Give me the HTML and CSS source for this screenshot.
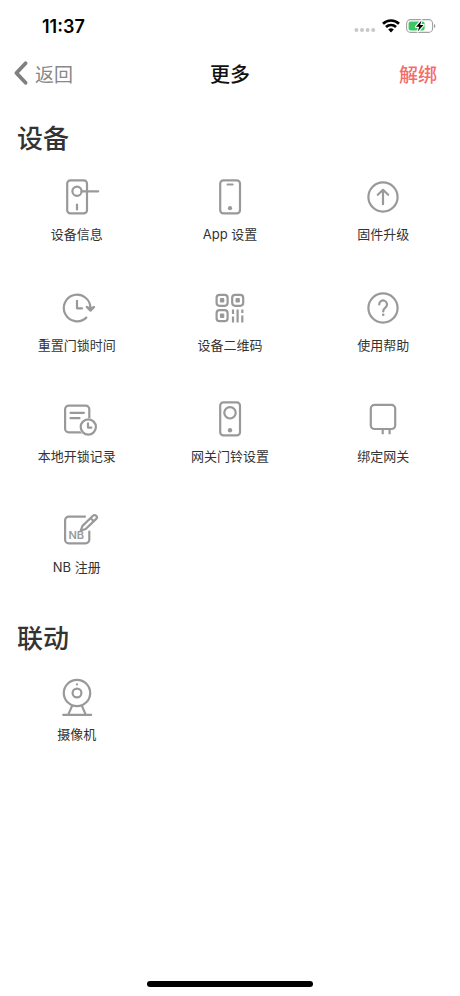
FILE: index.html
```html
<!DOCTYPE html>
<html lang="zh-CN">
<head>
<meta charset="utf-8">
<meta name="viewport" content="width=device-width, initial-scale=1">
<title>更多</title>
<link rel="stylesheet" href="styles.css">
</head>
<body>
<div class="status">
  <span class="time">11:37</span>
  <div class="signals">
    <svg width="22" height="16" viewBox="0 0 22 16" fill="#c8c8c8" aria-hidden="true"><circle cx="2.4" cy="12" r="2"/><circle cx="8" cy="12" r="2"/><circle cx="13.6" cy="12" r="2"/><circle cx="19.2" cy="12" r="2"/></svg>
    <svg width="18" height="16" viewBox="0 0 18 16" aria-hidden="true"><g fill="none" stroke="#000" stroke-width="2.6"><path d="M1 5.8a11.4 11.4 0 0 1 16 0"/><path d="M4 9a7.1 7.1 0 0 1 10 0"/></g><path d="M9 14.4 6.2 11.6a4 4 0 0 1 5.6 0z"/></svg>
    <svg width="30" height="16" viewBox="0 0 30 16" aria-hidden="true"><rect x=".6" y="1.6" width="26" height="12.8" rx="4" fill="none" stroke="#a0a0a0" stroke-width="1.1"/><path d="M28 6v4q1.4-.6 1.4-2T28 6z" fill="#999"/><rect x="2.6" y="3.4" width="16" height="9.2" rx="2" fill="#3bc763"/><path d="M15.5 2.4 10 8.8h3.2L11.7 13.6l5.8-6.5h-3.4z" fill="#000" stroke="#fff" stroke-width="2.2" stroke-linejoin="round" paint-order="stroke"/></svg>
  </div>
</div>
<header class="nav">
  <button class="back" type="button"><svg width="16" height="26" viewBox="0 0 16 26" aria-hidden="true"><path d="M12.6 3.2 3.4 13l9.2 9.8" fill="none" stroke="#808080" stroke-width="3.8" stroke-linecap="round" stroke-linejoin="round"/></svg>返回</button>
  <h1>更多</h1>
  <button class="unbind" type="button">解绑</button>
</header>
<main>
  <section>
    <h2>设备</h2>
    <div class="grid">
      <button class="item" type="button"><svg class="icon" viewBox="0 0 48 40"><rect x="14.2" y="3.4" width="19.8" height="33" rx="3.2"/><circle cx="24" cy="14.3" r="4.6"/><path d="M28.6 14.3H45.2M24 27.5v5"/></svg>设备信息</button>
      <button class="item" type="button"><svg class="icon" viewBox="0 0 48 40"><rect x="14.2" y="3.4" width="19.8" height="33" rx="3.2"/><path d="M21.6 7.5h5"/><circle class="solid" cx="24" cy="31.2" r="2.1"/></svg>App 设置</button>
      <button class="item" type="button"><svg class="icon" viewBox="0 0 48 40"><circle cx="24" cy="20" r="14.6"/><path d="M24 27.2V13M18.8 17.8l5.2-5 5.2 5"/></svg>固件升级</button>
      <button class="item" type="button"><svg class="icon" viewBox="0 0 48 40"><path d="M33.3 29.6A13.3 13.3 0 1 1 37.4 20.5M24 12.8V20.3h5"/><path class="head" d="M33.8 19l3.7 3.6 3.6-3.6-3.6 1.6z"/></svg>重置门锁时间</button>
      <button class="item" type="button"><svg class="icon" viewBox="0 0 48 40"><rect x="10.6" y="6.8" width="11" height="11" rx="3"/><rect x="26.2" y="6.8" width="11" height="11" rx="3"/><rect x="10.6" y="22.2" width="11" height="11" rx="3"/><g class="solid"><rect x="13.9" y="10.1" width="4.4" height="4.4" rx="1"/><rect x="29.5" y="10.1" width="4.4" height="4.4" rx="1"/><rect x="13.9" y="25.5" width="4.4" height="4.4" rx="1"/></g><path stroke-linecap="butt" d="M27 21.4V26M27 28.6v5.8M31.6 21.4v13M36.3 21.4V25M36.3 27.6v6.8"/></svg>设备二维码</button>
      <button class="item" type="button"><svg class="icon" viewBox="0 0 48 40"><circle cx="24" cy="20" r="14.6"/><path d="M20.2 16.4a3.9 3.9 0 1 1 6.4 3Q24.2 21.3 24.2 23.4"/><circle class="solid" cx="24.2" cy="26.8" r="1.3"/></svg>使用帮助</button>
      <button class="item" type="button"><svg class="icon" viewBox="0 0 48 40"><rect x="12.1" y="6.6" width="24.2" height="26.8" rx="3.6"/><path d="M17.5 13.8h13.4M17.5 19.2h9"/><circle class="gap" cx="35.3" cy="28" r="8"/><circle cx="35.3" cy="28" r="7.6"/><path d="M35 24.4v4.2h3.4"/></svg>本地开锁记录</button>
      <button class="item" type="button"><svg class="icon" viewBox="0 0 48 40"><rect x="14.2" y="3.4" width="19.8" height="33" rx="3.2"/><circle cx="24" cy="13.8" r="5.7"/><circle class="solid" cx="24" cy="31.2" r="2.2"/></svg>网关门铃设置</button>
      <button class="item" type="button"><svg class="icon" viewBox="0 0 48 40"><rect x="11.8" y="5.8" width="24.4" height="24.2" rx="3.8"/><path stroke-linecap="butt" d="M23.7 30v5.2M30.6 30v5.2"/></svg>绑定网关</button>
      <button class="item" type="button"><svg class="icon" viewBox="0 0 48 40"><path d="M32 6.6H15.7a3.6 3.6 0 0 0-3.6 3.6v19.6a3.6 3.6 0 0 0 3.6 3.6h17a3.6 3.6 0 0 0 3.6-3.6V21.5"/><text x="15.4" y="29.4">NB</text><path d="M27.6 20.8 29.5 15.9 40 5.7a2.25 2.25 0 0 1 3.2 3.2L32.7 19z M37.6 8.1l3.2 3.2"/></svg>NB 注册</button>
    </div>
  </section>
  <section>
    <h2>联动</h2>
    <div class="grid">
      <button class="item" type="button"><svg class="icon" viewBox="0 0 48 40"><circle cx="24" cy="16" r="13.2"/><circle cx="24" cy="16" r="4.4"/><circle class="solid" cx="24" cy="7.4" r="1.1"/><path d="M19.2 28.6 15.3 37.6M28.8 28.6l3.9 9M10.2 37.8h28"/></svg>摄像机</button>
    </div>
  </section>
</main>
<footer class="home"><span class="bar"></span></footer>
</body>
</html>
```
FILE: styles.css
```css
* { box-sizing: border-box; }

body {
  display: flex;
  flex-direction: column;
  min-height: 100vh;
  margin: 0;
  background: #fff;
  color: #333;
  font-family: Inter, "Noto Sans CJK SC", sans-serif;
}

button {
  padding: 0;
  border: 0;
  background: none;
  color: inherit;
  font: inherit;
  cursor: pointer;
}

.status {
  display: flex;
  justify-content: space-between;
  align-items: center;
  height: 52px;
  padding: 0 24px 0 42px;
  color: #000;
}

.time {
  font-size: 18px;
  font-weight: 600;
}

.signals {
  display: flex;
  gap: 6px;
}

.nav {
  display: grid;
  grid-template-columns: 1fr auto 1fr;
  align-items: center;
  height: 42px;
  padding: 0 13px;
}

.nav h1 {
  margin: 0;
  color: #111;
  font-size: 20px;
  font-weight: 500;
}

.back,
.unbind {
  display: flex;
  align-items: center;
  gap: 6px;
  font-size: 19px;
}

.back { color: #888; }

.unbind {
  justify-self: end;
  padding-right: 10px;
  color: #f56c6c;
  font-weight: 500;
}

main {
  display: flex;
  flex: 1;
  flex-direction: column;
  gap: 42px;
  padding-top: 25px;
}

h2 {
  margin: 0 0 18px;
  padding-left: 17px;
  font-size: 26px;
  font-weight: 500;
  line-height: 40px;
}

.grid {
  display: grid;
  grid-template-columns: repeat(3, 1fr);
  row-gap: 44px;
}

.item {
  display: flex;
  flex-direction: column;
  align-items: center;
  gap: 7px;
  font-size: 13px;
  line-height: 20px;
}

.icon {
  width: 48px;
  height: 40px;
  fill: none;
  stroke: #999;
  stroke-width: 2.2;
  stroke-linecap: round;
  stroke-linejoin: round;
}

.icon .solid {
  fill: #999;
  stroke: none;
}

.icon .head {
  fill: #999;
}

.icon .gap {
  fill: #fff;
  stroke: #fff;
}

.icon text {
  fill: #999;
  stroke: none;
  font-size: 11px;
  font-weight: 600;
}

.home {
  display: flex;
  justify-content: center;
  padding-bottom: 9px;
}

.bar {
  width: 36%;
  height: 6px;
  border-radius: 3px;
  background: #000;
}
```
